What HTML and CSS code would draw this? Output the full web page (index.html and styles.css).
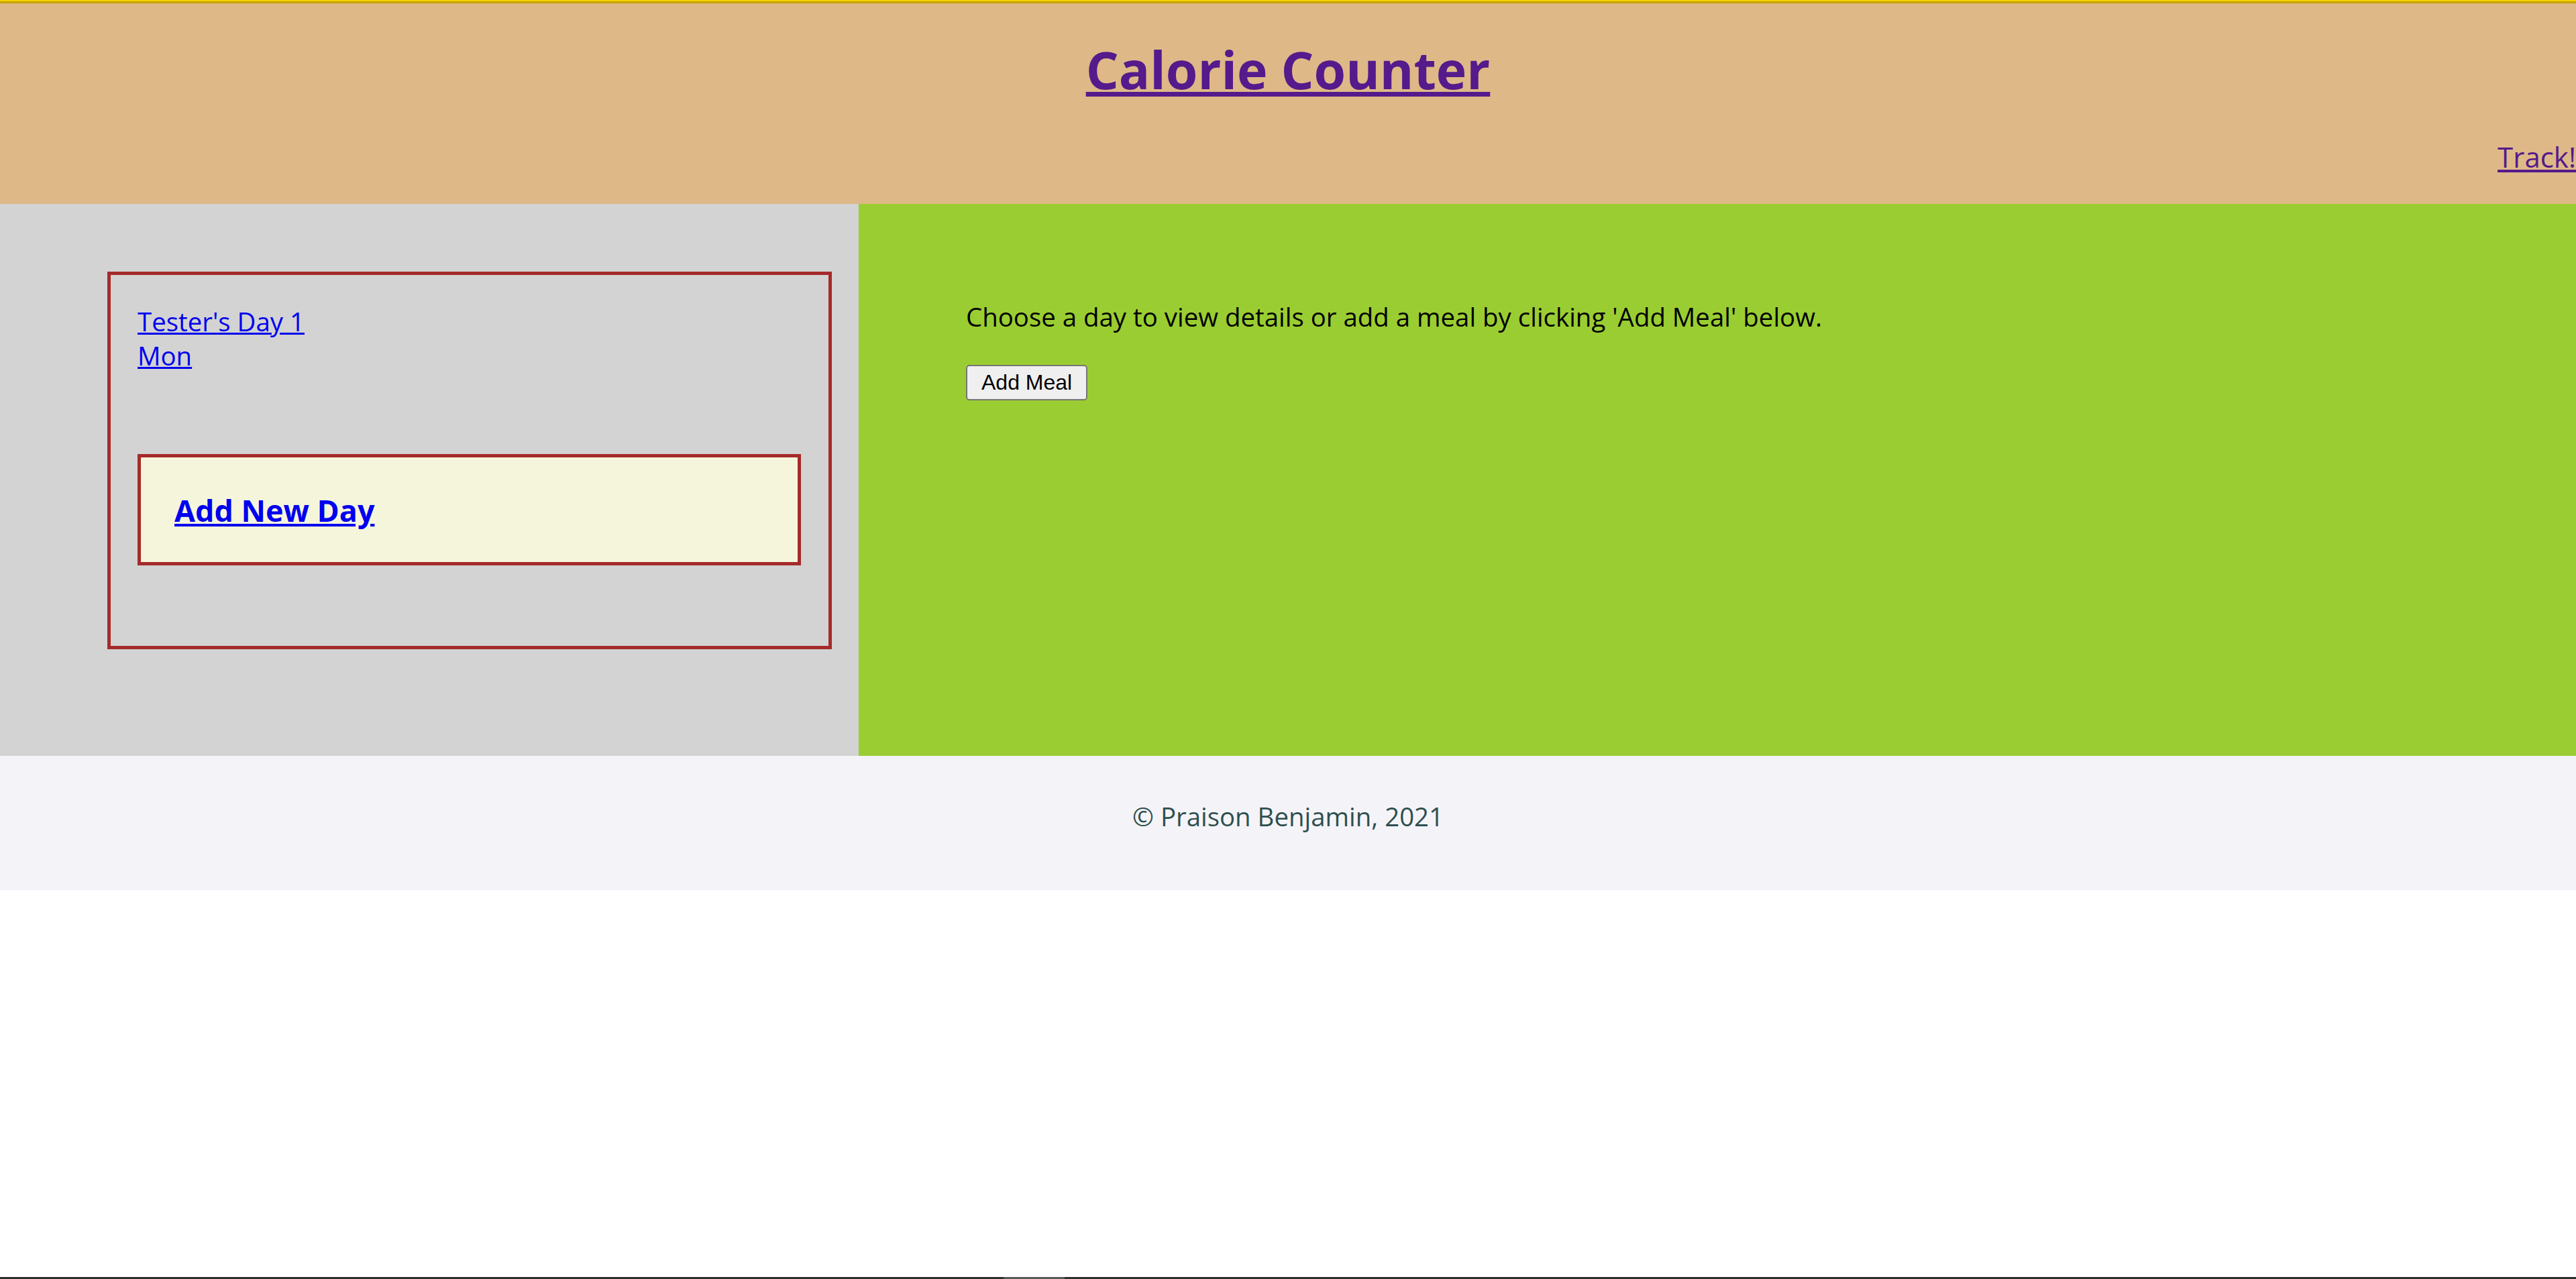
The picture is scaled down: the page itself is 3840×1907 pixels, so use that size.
FILE: index.html
```html
<!DOCTYPE html>
<html lang="en">
<head>
<meta charset="utf-8">
<title>Calorie Counter</title>
<link rel="stylesheet" href="styles.css">
</head>
<body>
<div class="topbar"></div>
<header class="header">
  <h1 class="title"><a class="visited" href="#">Calorie Counter</a></h1>
  <nav class="nav"><a class="visited" href="#">Track!</a></nav>
</header>
<main class="main">
  <aside class="days">
    <div class="day-box">
      <div class="day-list">
        <a class="link" href="#">Tester's Day 1</a>
        <a class="link" href="#">Mon</a>
      </div>
      <div class="add-day">
        <h3 class="add-day-title"><a class="link" href="#">Add New Day</a></h3>
      </div>
    </div>
  </aside>
  <section class="details">
    <p class="intro">Choose a day to view details or add a meal by clicking 'Add Meal' below.</p>
    <button class="btn" type="button">Add Meal</button>
  </section>
</main>
<footer class="footer">
  <p class="copy">© Praison Benjamin, 2021</p>
</footer>
<div class="taskbar"><span class="taskbar-mid"></span></div>
</body>
</html>
```
FILE: styles.css
```css
html {
  overflow: hidden;
}
body {
  margin: 0;
  font-family: "Open Sans", "Noto Sans", sans-serif;
  font-size: 38.4px;
  line-height: 1.33;
  color: #000;
  background: #fff;
}
a.link {
  color: #0000ee;
}
a.visited {
  color: #551a8b;
}
.topbar {
  height: 2px;
  background: #f4d000;
  border-bottom: 3px solid #c9a300;
}
.header {
  background: #deb887;
  height: 299px;
  padding-top: 47px;
  box-sizing: border-box;
}
.title {
  margin: 0;
  text-align: center;
  font-size: 77px;
  font-weight: 700;
  line-height: 1.35;
}
.nav {
  margin-top: 50px;
  display: flex;
  justify-content: flex-end;
  font-size: 42px;
  line-height: 1.33;
}
.main {
  display: flex;
}
.days {
  width: 1280px;
  flex: none;
  box-sizing: border-box;
  background: #d3d3d3;
  padding: 101px 40px 159px 160px;
}
.day-box {
  border: 5px solid #a52a2a;
  padding: 44px 41px 120px 40px;
}
.day-list {
  display: flex;
  flex-direction: column;
  align-items: flex-start;
}
.add-day {
  margin-top: 121px;
  background: #f5f5dc;
  border: 5px solid #a52a2a;
  padding: 49px 50px 47px 50px;
}
.add-day-title {
  margin: 0;
  font-size: 44.9px;
  font-weight: 700;
  line-height: 1.33;
}
.details {
  flex: 1;
  background: #9acd32;
  padding: 143px 0 0 160px;
}
.intro {
  margin: 0;
}
.btn {
  display: block;
  margin-top: 46px;
  font-family: "Liberation Sans", Arial, sans-serif;
  font-size: 32px;
  line-height: 1.15;
  color: #000;
  background: #efefef;
  border: 2px solid #767676;
  border-radius: 5px;
  padding: 6px 21px;
}
.footer {
  background: #f4f4f8;
  height: 200px;
  box-sizing: border-box;
  padding-top: 65px;
}
.copy {
  margin: 0;
  text-align: center;
  color: #2f4f4f;
}
.taskbar {
  position: fixed;
  left: 0;
  right: 0;
  bottom: 0;
  height: 3px;
  background: #2e2e2e;
}
.taskbar-mid {
  position: absolute;
  left: 1496px;
  width: 91px;
  top: 0;
  bottom: 0;
  background: #5a5a5a;
}
```
